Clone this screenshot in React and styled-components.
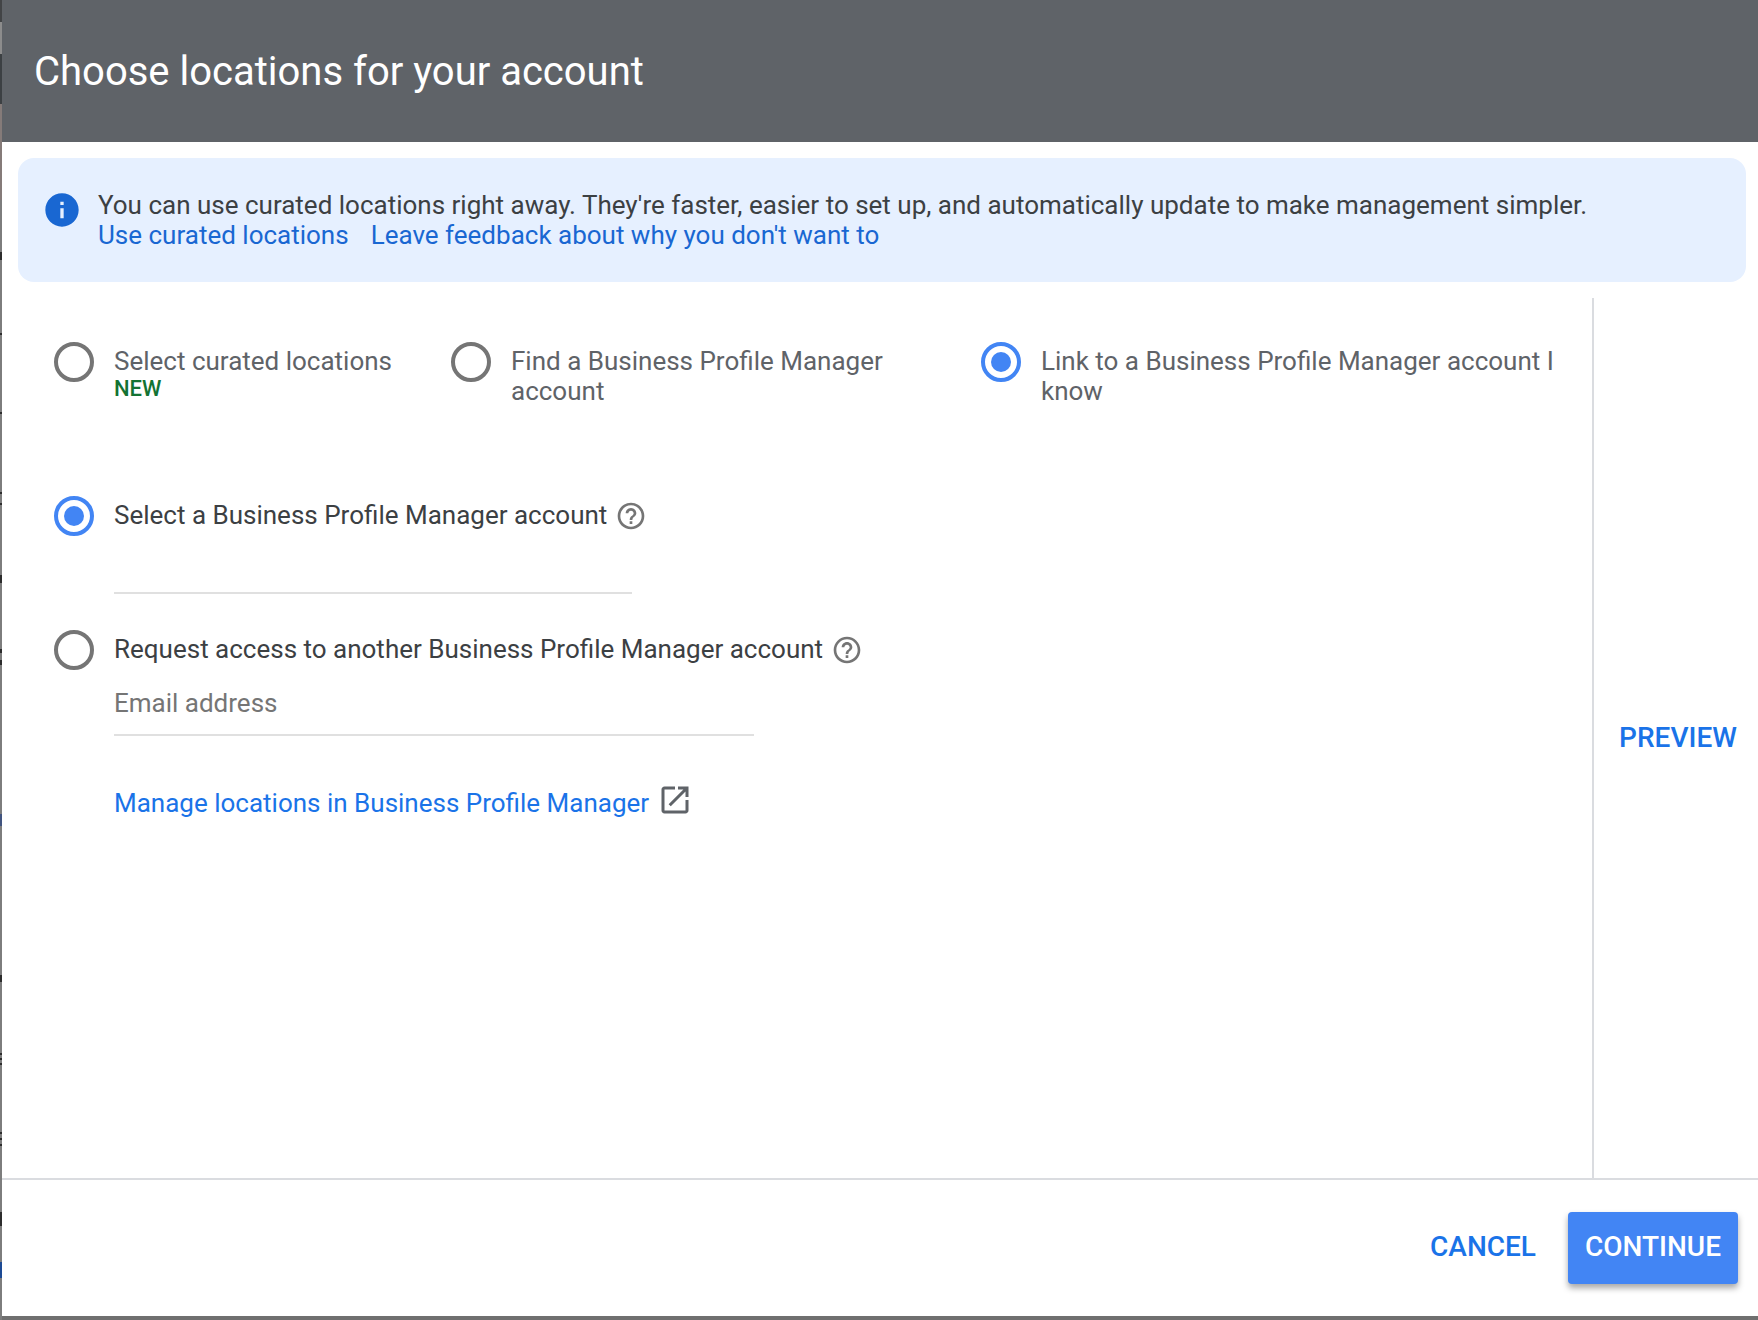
import React, { useState } from "react";
import styled, { createGlobalStyle, css } from "styled-components";

const GlobalStyle = createGlobalStyle`
  *, *::before, *::after { box-sizing: border-box; }
  body { margin: 0; background: #7d7d7d; }
  body, button, input { font-family: Roboto, "Liberation Sans", sans-serif; }
`;

/* Slivers of the dimmed page that stay visible beside the dialog: [from, to, colour] */
const slivers = [
  [0, 22, "#424446"],
  [22, 54, "#8c8c8c"],
  [54, 104, "#3c4043"],
  [104, 200, "#857b79"],
  [252, 260, "#2c2c2c"],
  [333, 335, "#2c2c2c"],
  [412, 414, "#2c2c2c"],
  [492, 494, "#2c2c2c"],
  [503, 505, "#2c2c2c"],
  [575, 583, "#2c2c2c"],
  [649, 653, "#2c2c2c"],
  [660, 665, "#2c2c2c"],
  [814, 826, "#41547f"],
  [975, 982, "#2c2c2c"],
  [1053, 1055, "#2c2c2c"],
  [1058, 1060, "#2c2c2c"],
  [1063, 1065, "#2c2c2c"],
  [1132, 1134, "#2c2c2c"],
  [1138, 1140, "#2c2c2c"],
  [1144, 1146, "#2c2c2c"],
  [1212, 1226, "#2c2c2c"],
  [1262, 1278, "#1c4a94"],
];

const page = "#7d7d7d";
const sliverStops = slivers
  .map(([from, to, color], i) => {
    const before = i ? slivers[i - 1][1] : 0;
    return `${page} ${before}px ${from}px, ${color} ${from}px ${to}px`;
  })
  .join(", ");

const Backdrop = styled.div`
  display: flex;
  min-height: 100vh;
  padding: 0 0 4px 2px;
  background:
    linear-gradient(to bottom, ${sliverStops}, ${page} 1278px) left top / 2px 100% no-repeat,
    #6f6f6f;
`;

const Dialog = styled.section`
  display: flex;
  flex: 1;
  flex-direction: column;
  background: #fff;
  color: #3c4043;
  font-size: 26px;
  line-height: 30px;
`;

const Header = styled.header`
  display: flex;
  align-items: center;
  padding: 48px 32px 46px;
  background: #5f6368;
  color: #fff;
`;

const Title = styled.h1`
  margin: 0;
  font-size: 40px;
  font-weight: 400;
  line-height: 48px;
`;

const Banner = styled.aside`
  display: flex;
  gap: 16px;
  margin: 16px 12px 16px 16px;
  padding: 32px 24px;
  border-radius: 16px;
  background: #e6f0ff;
`;

const BannerText = styled.p`
  margin: 0;
`;

const BannerLinks = styled.div`
  display: flex;
  gap: 22px;
`;

const Link = styled.a`
  color: ${(p) => (p.$deep ? "#1967d2" : "#1a73e8")};
  text-decoration: none;
`;

const Icon = styled.svg`
  flex: none;
  display: block;
  width: ${(p) => p.$size}px;
  height: ${(p) => p.$size}px;
  fill: ${(p) => p.$color};
`;

const Main = styled.div`
  display: flex;
  flex: 1;
`;

const Form = styled.form`
  flex: 1;
  padding: 44px 16px 44px 52px;
`;

const Modes = styled.div`
  display: grid;
  grid-template-columns: 397px 530px 1fr;
  margin-bottom: 90px;
`;

const RadioRow = styled.label`
  display: flex;
  align-items: flex-start;
  gap: 20px;
  color: ${(p) => (p.$muted ? "#5f6368" : "#3c4043")};
`;

const Radio = styled.input.attrs({ type: "radio" })`
  appearance: none;
  flex: none;
  display: grid;
  place-items: center;
  width: 40px;
  height: 40px;
  margin: 0;
  border: 4px solid #757575;
  border-radius: 50%;

  &:checked { border-color: #4285f4; }
  &:checked::before {
    content: "";
    width: 20px;
    height: 20px;
    border-radius: 50%;
    background: #4285f4;
  }
`;

const RadioText = styled.span`
  padding: 4px 16px 0 0;
`;

const NewTag = styled.span`
  display: block;
  color: #137333;
  font-size: 22px;
  font-weight: 500;
  line-height: 26px;
`;

const Choice = styled.div`
  display: flex;
  align-items: center;
`;

const HelpButton = styled.button`
  padding: 0;
  margin-left: -8px;
  border: 0;
  background: none;
`;

const field = css`
  display: block;
  height: 58px;
  margin-left: 60px;
  padding: 0;
  border: 0;
  border-bottom: 2px solid #e0e0e0;
  border-radius: 0;
  outline: 0;
  background: transparent;
  color: #3c4043;
  font-size: 26px;
`;

const AccountField = styled.input`
  ${field}
  width: 518px;
  margin-bottom: 36px;
`;

const EmailField = styled.input`
  ${field}
  width: 640px;
  height: 66px;
  padding-top: 2px;
  margin-bottom: 46px;
  &::placeholder { color: #757575; opacity: 1; }
`;

const ManageRow = styled.div`
  display: flex;
  gap: 8px;
  margin-left: 60px;
  align-items: flex-start;
`;

const ManageLink = styled(Link)`
  padding-top: 6px;
`;

const PreviewPane = styled.div`
  display: flex;
  flex: none;
  align-items: center;
  justify-content: center;
  width: 166px;
  padding-left: 4px;
  border-left: 2px solid #dadce0;
`;

const Footer = styled.footer`
  display: flex;
  justify-content: flex-end;
  gap: 16px;
  padding: 32px 20px;
  border-top: 2px solid #dadce0;
`;

const Button = styled.button`
  height: 72px;
  min-width: ${(p) => (p.$filled ? 170 : 138)}px;
  padding: 0 16px 2px;
  border: 0;
  border-radius: 4px;
  background: ${(p) => (p.$filled ? "#4285f4" : "transparent")};
  box-shadow: ${(p) => (p.$filled ? "0 4px 6px rgba(0, 0, 0, 0.35)" : "none")};
  color: ${(p) => (p.$filled ? "#fff" : "#1a73e8")};
  font-size: 28px;
  font-weight: 500;
  line-height: 32px;
`;

const PreviewButton = styled(Button)`
  padding-bottom: 0;
`;

const paths = {
  info: "M12 2C6.48 2 2 6.48 2 12s4.48 10 10 10 10-4.48 10-10S17.52 2 12 2zm1 15h-2v-6h2v6zm0-8h-2V7h2v2z",
  help: "M11 18h2v-2h-2v2zm1-16C6.48 2 2 6.48 2 12s4.48 10 10 10 10-4.48 10-10S17.52 2 12 2zm0 18c-4.41 0-8-3.59-8-8s3.59-8 8-8 8 3.59 8 8-3.59 8-8 8zm0-14c-2.21 0-4 1.79-4 4h2c0-1.1.9-2 2-2s2 .9 2 2c0 2-3 1.75-3 5h2c0-2.25 3-2.5 3-5 0-2.21-1.79-4-4-4z",
  open: "M19 19H5V5h7V3H5c-1.11 0-2 .9-2 2v14c0 1.1.89 2 2 2h14c1.1 0 2-.9 2-2v-7h-2v7zM14 3v2h3.59l-9.83 9.83 1.41 1.41L19 6.41V10h2V3h-7z",
};

function Glyph({ name, size, color }) {
  return (
    <Icon viewBox="0 0 24 24" $size={size} $color={color} aria-hidden="true">
      <path d={paths[name]} />
    </Icon>
  );
}

function Help({ label }) {
  return (
    <HelpButton type="button" aria-label={label}>
      <Glyph name="help" size={32} color="#757575" />
    </HelpButton>
  );
}

const modes = [
  { id: "curated", text: "Select curated locations", isNew: true },
  { id: "find", text: "Find a Business Profile Manager account" },
  { id: "link", text: "Link to a Business Profile Manager account I know" },
];

export default function App() {
  const [mode, setMode] = useState("link");
  const [source, setSource] = useState("select");

  return (
    <>
      <GlobalStyle />
      <Backdrop>
        <Dialog role="dialog" aria-labelledby="title">
          <Header>
            <Title id="title">Choose locations for your account</Title>
          </Header>
          <Banner>
            <Glyph name="info" size={40} color="#1967d2" />
            <div>
              <BannerText>
                You can use curated locations right away. They're faster, easier
                to set up, and automatically update to make management simpler.
              </BannerText>
              <BannerLinks>
                <Link $deep href="#curated">Use curated locations</Link>
                <Link $deep href="#feedback">
                  Leave feedback about why you don't want to
                </Link>
              </BannerLinks>
            </div>
          </Banner>
          <Main>
            <Form>
              <Modes>
                {modes.map((m) => (
                  <RadioRow key={m.id} $muted>
                    <Radio
                      name="mode"
                      checked={mode === m.id}
                      onChange={() => setMode(m.id)}
                    />
                    <RadioText>
                      {m.text}
                      {m.isNew && <NewTag>NEW</NewTag>}
                    </RadioText>
                  </RadioRow>
                ))}
              </Modes>
              <Choice>
                <RadioRow>
                  <Radio
                    name="source"
                    checked={source === "select"}
                    onChange={() => setSource("select")}
                  />
                  <RadioText>Select a Business Profile Manager account</RadioText>
                </RadioRow>
                <Help label="About selecting an account" />
              </Choice>
              <AccountField aria-label="Business Profile Manager account" />
              <Choice>
                <RadioRow>
                  <Radio
                    name="source"
                    checked={source === "request"}
                    onChange={() => setSource("request")}
                  />
                  <RadioText>
                    Request access to another Business Profile Manager account
                  </RadioText>
                </RadioRow>
                <Help label="About requesting access" />
              </Choice>
              <EmailField
                type="email"
                aria-label="Email address"
                placeholder="Email address"
              />
              <ManageRow>
                <ManageLink href="#manage">
                  Manage locations in Business Profile Manager
                </ManageLink>
                <Glyph name="open" size={36} color="#5f6368" />
              </ManageRow>
            </Form>
            <PreviewPane>
              <PreviewButton type="button">PREVIEW</PreviewButton>
            </PreviewPane>
          </Main>
          <Footer>
            <Button type="button">CANCEL</Button>
            <Button type="button" $filled>CONTINUE</Button>
          </Footer>
        </Dialog>
      </Backdrop>
    </>
  );
}
